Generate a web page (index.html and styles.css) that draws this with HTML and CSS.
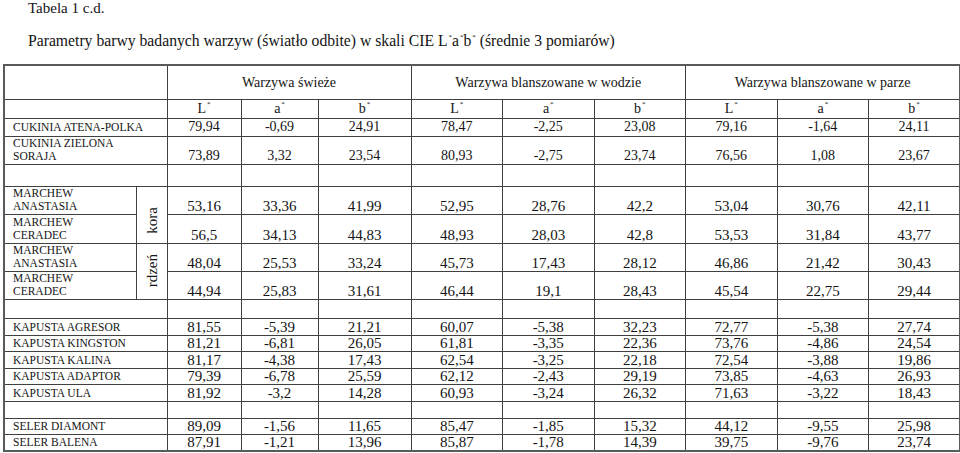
FILE: index.html
```html
<!DOCTYPE html>
<html lang="pl">
<head>
<meta charset="utf-8">
<title>Tabela 1 c.d.</title>
<link rel="stylesheet" href="styles.css">
</head>
<body>
<div class="page">
  <p class="caption">Tabela 1 c.d.</p>
  <p class="title">Parametry barwy badanych warzyw (światło odbite) w skali CIE L<sup>*</sup>a<sup>*</sup>b<sup>*</sup> (średnie 3 pomiarów)</p>
  <table class="data">
    <colgroup>
      <col class="c-lab"><col class="c-sub">
      <col class="c-1"><col class="c-2"><col class="c-3">
      <col class="c-n"><col class="c-n"><col class="c-n">
      <col class="c-n"><col class="c-n"><col class="c-n">
    </colgroup>
    <tbody>
      <tr class="h-group">
        <td colspan="2"></td>
        <td colspan="3">Warzywa świeże</td>
        <td colspan="3">Warzywa blanszowane w wodzie</td>
        <td colspan="3">Warzywa blanszowane w parze</td>
      </tr>
      <tr class="h-param">
        <td colspan="2"></td>
        <td>L<sup>*</sup></td><td>a<sup>*</sup></td><td>b<sup>*</sup></td>
        <td>L<sup>*</sup></td><td>a<sup>*</sup></td><td>b<sup>*</sup></td>
        <td>L<sup>*</sup></td><td>a<sup>*</sup></td><td>b<sup>*</sup></td>
      </tr>
      <tr class="r-cuk1 small">
        <td colspan="2" class="lab">CUKINIA ATENA-POLKA</td>
        <td>79,94</td><td>-0,69</td><td>24,91</td><td>78,47</td><td>-2,25</td><td>23,08</td><td>79,16</td><td>-1,64</td><td>24,11</td>
      </tr>
      <tr class="r-cuk2 small">
        <td colspan="2" class="lab">CUKINIA ZIELONA<br>SORAJA</td>
        <td>73,89</td><td>3,32</td><td>23,54</td><td>80,93</td><td>-2,75</td><td>23,74</td><td>76,56</td><td>1,08</td><td>23,67</td>
      </tr>
      <tr class="r-gap1">
        <td colspan="2"></td><td></td><td></td><td></td><td></td><td></td><td></td><td></td><td></td><td></td>
      </tr>
      <tr class="r-m1">
        <td class="lab">MARCHEW<br>ANASTASIA</td>
        <td rowspan="2" class="part"><span class="vert">kora</span></td>
        <td>53,16</td><td>33,36</td><td>41,99</td><td>52,95</td><td>28,76</td><td>42,2</td><td>53,04</td><td>30,76</td><td>42,11</td>
      </tr>
      <tr class="r-m2">
        <td class="lab">MARCHEW<br>CERADEC</td>
        <td>56,5</td><td>34,13</td><td>44,83</td><td>48,93</td><td>28,03</td><td>42,8</td><td>53,53</td><td>31,84</td><td>43,77</td>
      </tr>
      <tr class="r-m3">
        <td class="lab">MARCHEW<br>ANASTASIA</td>
        <td rowspan="2" class="part part-low"><span class="vert">rdzeń</span></td>
        <td>48,04</td><td>25,53</td><td>33,24</td><td>45,73</td><td>17,43</td><td>28,12</td><td>46,86</td><td>21,42</td><td>30,43</td>
      </tr>
      <tr class="r-m4">
        <td class="lab">MARCHEW<br>CERADEC</td>
        <td>44,94</td><td>25,83</td><td>31,61</td><td>46,44</td><td>19,1</td><td>28,43</td><td>45,54</td><td>22,75</td><td>29,44</td>
      </tr>
      <tr class="r-gap2">
        <td colspan="2"></td><td></td><td></td><td></td><td></td><td></td><td></td><td></td><td></td><td></td>
      </tr>
      <tr class="r-k">
        <td colspan="2" class="lab">KAPUSTA AGRESOR</td>
        <td>81,55</td><td>-5,39</td><td>21,21</td><td>60,07</td><td>-5,38</td><td>32,23</td><td>72,77</td><td>-5,38</td><td>27,74</td>
      </tr>
      <tr class="r-k r-k-s">
        <td colspan="2" class="lab">KAPUSTA KINGSTON</td>
        <td>81,21</td><td>-6,81</td><td>26,05</td><td>61,81</td><td>-3,35</td><td>22,36</td><td>73,76</td><td>-4,86</td><td>24,54</td>
      </tr>
      <tr class="r-k">
        <td colspan="2" class="lab">KAPUSTA KALINA</td>
        <td>81,17</td><td>-4,38</td><td>17,43</td><td>62,54</td><td>-3,25</td><td>22,18</td><td>72,54</td><td>-3,88</td><td>19,86</td>
      </tr>
      <tr class="r-k r-k-s">
        <td colspan="2" class="lab">KAPUSTA ADAPTOR</td>
        <td>79,39</td><td>-6,78</td><td>25,59</td><td>62,12</td><td>-2,43</td><td>29,19</td><td>73,85</td><td>-4,63</td><td>26,93</td>
      </tr>
      <tr class="r-k">
        <td colspan="2" class="lab">KAPUSTA ULA</td>
        <td>81,92</td><td>-3,2</td><td>14,28</td><td>60,93</td><td>-3,24</td><td>26,32</td><td>71,63</td><td>-3,22</td><td>18,43</td>
      </tr>
      <tr class="r-k">
        <td colspan="2"></td><td></td><td></td><td></td><td></td><td></td><td></td><td></td><td></td><td></td>
      </tr>
      <tr class="r-k r-k-s">
        <td colspan="2" class="lab">SELER DIAMONT</td>
        <td>89,09</td><td>-1,56</td><td>11,65</td><td>85,47</td><td>-1,85</td><td>15,32</td><td>44,12</td><td>-9,55</td><td>25,98</td>
      </tr>
      <tr class="r-k">
        <td colspan="2" class="lab">SELER BALENA</td>
        <td>87,91</td><td>-1,21</td><td>13,96</td><td>85,87</td><td>-1,78</td><td>14,39</td><td>39,75</td><td>-9,76</td><td>23,74</td>
      </tr>
    </tbody>
  </table>
</div>
</body>
</html>
```

FILE: styles.css
```css
html, body {
  margin: 0;
  padding: 0;
  background: #ffffff;
}

body {
  font-family: "Liberation Serif", "Times New Roman", serif;
  color: #141414;
}

.page {
  padding: 0 0 0 3px;
}

.caption {
  margin: 0 0 0 25px;
  font-size: 15px;
  line-height: 17px;
}

.title {
  margin: 16px 0 0 25px;
  font-size: 15.7px;
  line-height: 15px;
}

sup {
  font-size: 7px;
  line-height: 0;
  vertical-align: 7px;
  margin-left: 1px;
}

.data {
  margin-top: 16px;
  width: 955px;
  table-layout: fixed;
  border-collapse: collapse;
  border: 2px solid #5a5a5a;
}

.c-lab { width: 132px; }
.c-sub { width: 31px; }
.c-1 { width: 74px; }
.c-2 { width: 77px; }
.c-3 { width: 93px; }
.c-n { width: 91.5px; }

.data td {
  border: 1px solid #404040;
  padding: 0 0 1px 0;
  text-align: center;
  vertical-align: bottom;
  font-size: 15px;
  line-height: 14px;
  white-space: nowrap;
}

.data .small td {
  font-size: 14px;
}

.data td.lab {
  text-align: left;
  padding-left: 8px;
  font-size: 11.5px;
  line-height: 13px;
}

.h-group { height: 34px; }
.h-param { height: 19px; }

.data .h-group td,
.data .h-param td {
  font-size: 14px;
  vertical-align: middle;
  padding: 0;
}

.data .h-group td { padding-top: 1px; }

.r-cuk1 { height: 18px; }
.data .r-cuk1 td { padding-bottom: 2px; }
.r-cuk2 { height: 27px; }
.r-gap1 { height: 22px; }
.r-m1 { height: 27px; }
.r-m2 { height: 29px; }
.r-m3 { height: 28px; }
.r-m4 { height: 28px; }
.r-gap2 { height: 19px; }
.r-k { height: 17px; }
.r-k-s { height: 16px; }

.data .r-k td {
  line-height: 15px;
  padding-bottom: 0;
}

.data td.part {
  padding: 0 0 7px 0;
  vertical-align: bottom;
  text-align: center;
}

.data td.part-low {
  padding-bottom: 9px;
}

.vert {
  display: inline-block;
  writing-mode: vertical-rl;
  transform: rotate(180deg);
  font-size: 15px;
  line-height: 18px;
}
```
